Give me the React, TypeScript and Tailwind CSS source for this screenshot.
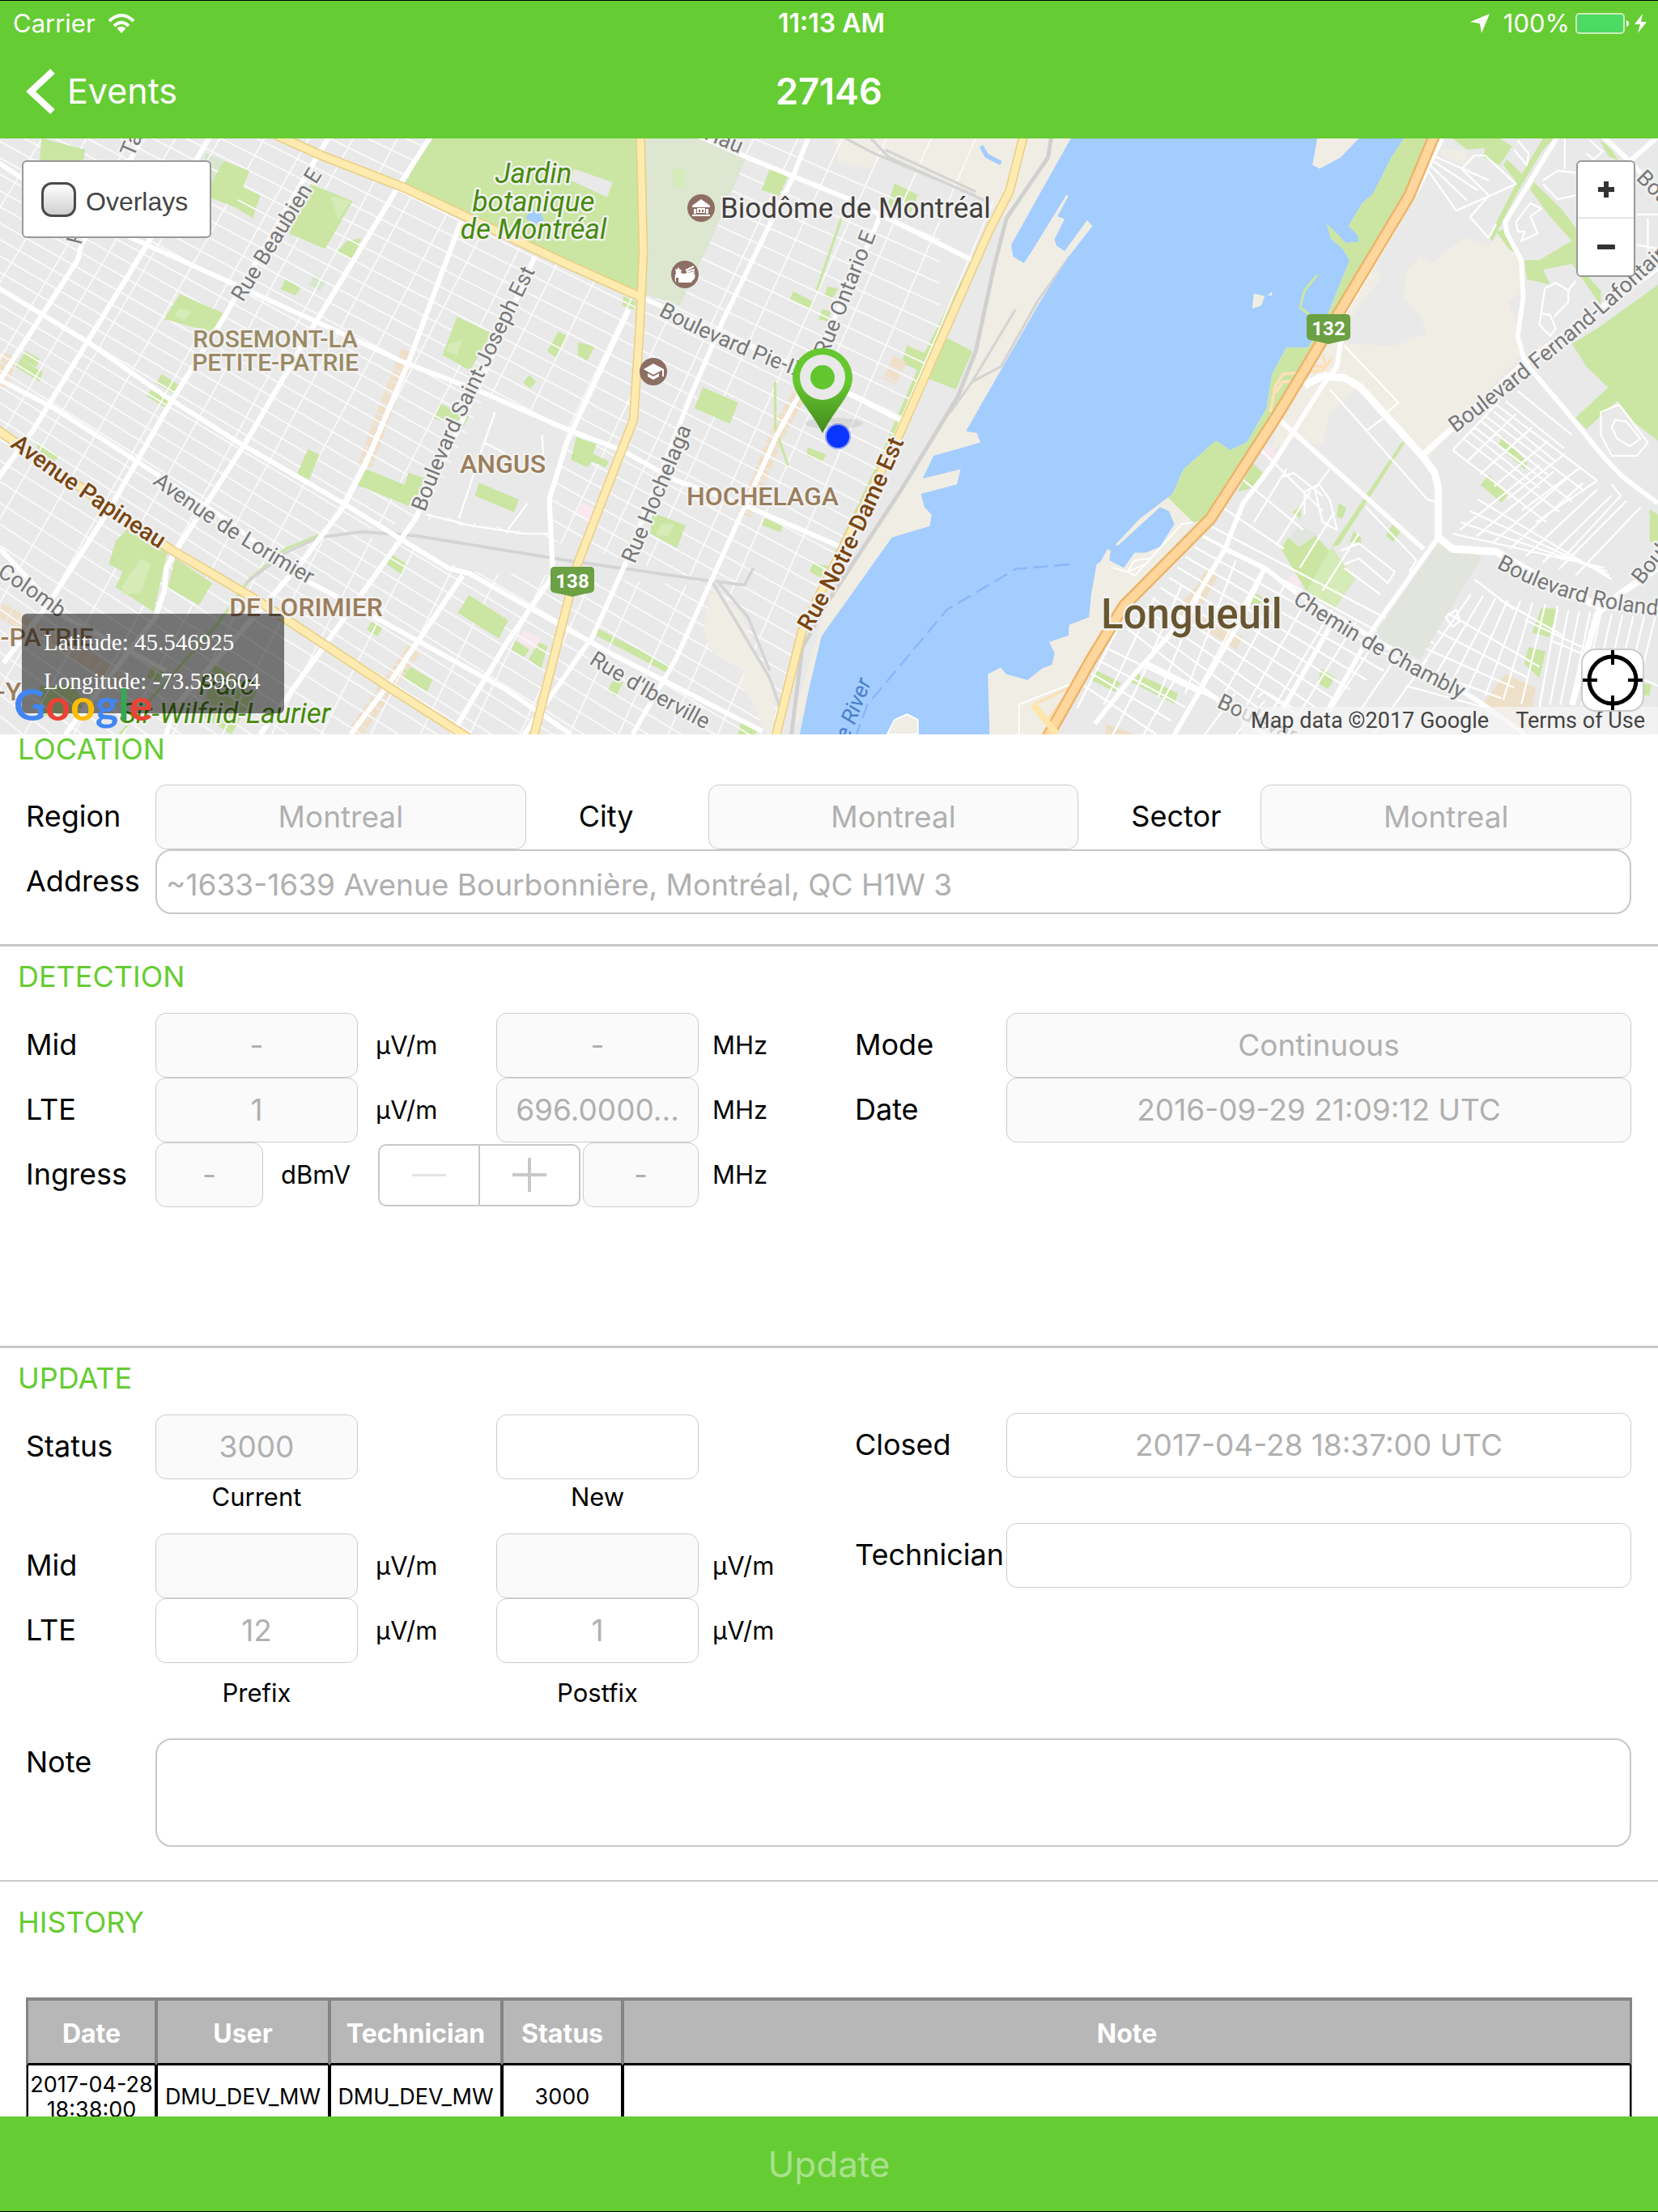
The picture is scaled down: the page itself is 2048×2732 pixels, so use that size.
import React from "react";

type Edge = [number, number, number, number];

/* Evenly spaced straight streets running from one edge to another. */
function hatch(a: Edge, b: Edge, n: number): string {
  let d = "";
  for (let i = 0; i <= n; i++) {
    const t = i / n;
    const x1 = a[0] + (a[2] - a[0]) * t;
    const y1 = a[1] + (a[3] - a[1]) * t;
    const x2 = b[0] + (b[2] - b[0]) * t;
    const y2 = b[1] + (b[3] - b[1]) * t;
    d += `M${x1.toFixed(0)},${y1.toFixed(0)}L${x2.toFixed(0)},${y2.toFixed(0)}`;
  }
  return d;
}

const PARK = "#cae6a2";
const SAND = "#f0ede4";
const WATER = "#a3ccff";

const parksWest = [
  "M1190,0H1760L1775,200L1765,400L1568,320L1290,205L1120,120Z",
  "M115,0L235,30L230,62H110Z",
  "M690,85L650,180L565,150L620,60Z",
  "M665,125L720,150L700,210L640,175Z",
  "M860,120L975,165L900,290L800,250Z",
  "M960,270L1000,262L975,318L930,300Z",
  "M790,370L832,392L818,413L776,397Z",
  "M498,410L618,460L590,510L455,475Z",
  "M70,558L110,580L100,602L58,580Z",
  "M58,580L118,615L110,640L42,600Z",
  "M447,620L496,650L485,675L432,645Z",
  "M424,655L475,688L460,710L406,678Z",
  "M1265,470L1360,512L1300,610L1225,570Z",
  "M1215,697L1300,730L1280,760L1198,735Z",
  "M1545,508L1568,520L1540,578L1514,560Z",
  "M1465,622L1484,640L1466,658L1448,642Z",
  "M1600,535L1645,548L1625,585L1598,570Z",
  "M852,818L884,832L855,898L823,882Z",
  "M1005,867L1120,912L1130,880L1175,895L1140,970L988,912Z",
  "M1325,906L1436,950L1422,983L1314,940Z",
  "M1595,785L1650,805L1640,830L1685,850L1675,865L1640,850L1625,865L1580,845Z",
  "M355,1025L465,1080L425,1245L320,1180L340,1140L302,1120L320,1060Z",
  "M485,1105L587,1170L550,1228L465,1180Z",
  "M1085,1095L1128,1122L1112,1148L1070,1120Z",
  "M1298,1202L1406,1268L1380,1315L1267,1248Z",
  "M1030,1270L1058,1288L1045,1310L1015,1292Z",
  "M1122,1382L1196,1424L1182,1456L1106,1412Z",
  "M1425,1320L1465,1345L1450,1365L1413,1345Z",
  "M1490,1325L1515,1335L1497,1397L1463,1370Z",
  "M420,1390L455,1405L440,1430L405,1418Z",
  "M590,1385L720,1440L640,1568L560,1520Z",
  "M110,1440H200L225,1470V1510L120,1520Z",
  "M100,800L165,835L150,850L105,820Z",
  "M1945,655L2042,695L2020,750L1922,710Z",
  "M2130,82L2180,98L2155,152L2108,135Z",
  "M2475,118L2540,148L2520,195L2455,180Z",
  "M2195,402L2252,430L2244,450L2185,425Z",
  "M2290,390L2320,395L2300,425L2280,415Z",
  "M2275,450L2300,455L2290,482L2265,475Z",
  "M2510,545L2560,565L2540,610L2495,590Z",
  "M2620,525L2690,560L2645,660L2570,632Z",
  "M2235,812L2285,832L2275,852L2230,835Z",
  "M1805,985L1897,1018L1873,1077L1800,1040Z",
  "M2115,998L2166,1020L2160,1036L2108,1018Z",
  "M2250,1118L2295,1125L2270,1155L2240,1140Z",
  "M1655,1290L1860,1390L1850,1408L1650,1308Z",
  "M1700,1420L1725,1430L1703,1470L1682,1450Z",
  "M2052,1525L2100,1550L2090,1568H2042Z",
  "M2700,300L2720,310L2480,800L2400,1000L2330,1100L2310,1090L2420,870L2560,560Z",
  "M1725,415L1760,430L1755,450L1722,440Z",
];

const parksEast = [
  "M865,0H935L870,150L640,530L520,710L330,1000L282,1010L212,945L225,935L255,870L345,795L385,820L430,800L485,710L500,620L540,550H600L655,460L715,320L695,290L662,262L652,225L705,275L740,272L738,255L712,230L750,170L780,145L830,50Z",
  "M1330,540L1400,500L1568,385V795L1505,750L1455,690L1370,765L1340,735L1430,655L1370,600Z",
  "M1000,0H1130L1165,20L1130,70L1085,50L1090,25L1040,30Z",
  "M1280,0L1250,30L1180,140L1110,270L1100,260L1180,110L1250,0Z",
  "M1150,55L1200,100L1180,120L1140,70Z",
  "M1225,115L1300,185L1345,240L1342,330L1410,400V440L1330,330L1250,345L1270,385L1205,370L1198,320L1240,320L1310,280L1330,270L1265,200L1215,135Z",
  "M1405,0L1440,30L1460,60L1430,45Z",
  "M1140,240L1170,300L1155,290L1120,245Z",
  "M1138,783L1207,855L1200,872L1125,808Z",
  "M1100,885L1152,938L1135,958L1077,912Z",
  "M1245,1235L1290,1238L1268,1313L1220,1300Z",
  "M1210,1338L1257,1350L1240,1420L1198,1382Z",
  "M448,855L475,880L445,920L405,930Z",
  "M545,1050L575,1075L620,1045L730,1160L670,1240L595,1190L525,1080Z",
  "M833,1015L855,1035L835,1062L815,1045Z",
  "M725,1035L747,1050V1065L715,1062Z",
  "M685,960L706,972L695,1000L678,995Z",
  "M580,965V1000L556,985Z",
  "M858,800L868,800L685,1070L665,1075Z",
  "M445,1192L480,1210L460,1235L430,1220Z",
  "M120,1405L240,1460L230,1488L105,1428Z",
  "M10,1398L82,1432L65,1456L0,1425Z",
  "M635,1395L675,1418L655,1448L628,1435Z",
  "M1545,975L1568,990V1070L1545,1060V1010Z",
  "M1530,1435H1550L1545,1465H1530Z",
];

const minorEast = [
  hatch([925, 75, 945, 45], [1010, 190, 1100, 110], 3),
  "M1010,190L1175,120L1090,45L1060,45L1025,80L1100,150L1048,207L1100,262L1120,225",
  "M1170,30L1205,70L1210,40L1180,5M1370,40L1390,55L1415,35L1380,5",
  "M1215,170L1175,220L1180,245L1200,245L1190,270L1235,250L1215,205L1245,185Z",
  "M1250,110L1290,85L1340,90M1250,120L1290,160L1340,150M1310,0V80",
  "M1340,375L1320,400L1285,380L1255,395L1240,490L1270,520L1285,500L1270,465L1245,460M1320,400V430L1280,470",
  "M660,660L930,950L950,955M700,545L850,695L820,720M760,770L810,735",
  hatch([1045, 770, 1180, 665], [1240, 920, 1330, 780], 4),
  hatch([1000, 820, 1230, 1010], [1130, 690, 1400, 900], 6),
  hatch([1000, 820, 1120, 700], [1260, 1010, 1400, 900], 4),
  hatch([1020, 1030, 1340, 1150], [1240, 860, 1520, 970], 7),
  hatch([1070, 950, 1000, 1040], [1440, 1160, 1420, 1130], 3),
  "M1440,910L1465,940L1300,1110M1410,720L1460,700L1540,800L1510,835H1440L1410,780ZM1440,760L1450,740L1480,745L1520,790L1490,810L1455,790Z",
  hatch([970, 1240, 870, 1440], [1240, 1390, 1100, 1500], 4),
  hatch([1050, 1200, 1290, 1230], [890, 1420, 1240, 1500], 7),
  hatch([1290, 1240, 1560, 1260], [1240, 1490, 1500, 1490], 9),
  hatch([1060, 1160, 1270, 1320], [1170, 1240, 1568, 1440], 3),
  hatch([470, 820, 300, 1040], [640, 980, 480, 1130], 3),
  hatch([540, 870, 740, 1040], [450, 1010, 640, 1190], 3),
  "M590,990V930L630,910L660,950L680,1030L640,1010L620,930M660,870L620,920M530,890L560,880L640,940",
  hatch([330, 1020, 100, 1290], [950, 1330, 480, 1568], 10),
  hatch([470, 1140, 930, 1370], [290, 1460, 780, 1568], 7),
  hatch([100, 1240, 400, 1110], [-40, 1500, 260, 1460], 4),
  hatch([40, 1340, -20, 1440], [300, 1460, 180, 1568], 3),
  hatch([150, 1400, 480, 1480], [60, 1568, 400, 1568], 4),
  "M690,1085L740,1065L840,1140L820,1170L740,1105L700,1120M760,970L900,1110L880,1140M700,1130L800,1200",
  "M460,1470L480,1455L560,1500M980,1260L1010,1240L1020,1270L1000,1285Z",
  "M1510,200H1568M1540,210V310M1510,280L1568,290",
].join("");

const majorWest =
  "M-10,900L90,770L400,290L590,-20M-10,650L215,320L225,280L400,-10M10,1380L130,1230L300,980L475,690L620,470L870,60L920,-20M180,1568L430,1260L455,1190L460,1130L490,1080L680,800L870,490L1100,130L1195,-10M460,1568L480,1500L720,1240L830,1120L950,970L1010,860L1130,590L1275,220M1480,310L1340,620L1150,1000L1000,1200L720,1568M1250,1568L1400,1330L1530,1150L1520,950L1568,800L1740,450M970,1568L1080,1430L1280,1150";
const majorWest2 =
  "M1450,1568L1640,1310L1730,1120L1910,680L2000,480L2190,110L2240,-10M1750,1568L1870,1370L2060,970L2150,780L2220,660L2420,240L2440,190M-10,60L100,130L360,260L640,380L870,480L1120,590L1340,670L1568,765L1720,820L1870,900L2060,965L2340,1080M-10,390L250,540L460,680L660,800L950,960L1110,1055L1240,1130L1300,1145L1568,1290L1700,1360L2110,1560M-10,630L150,710L380,850L620,1000L850,1165L1000,1240L1400,1450L1580,1568M1900,-20L2068,50L2350,160L2690,320M1768,415L2200,600L2500,745M0,1080L180,1260L300,1320L460,1400";

/* Text that follows a street. */
function Along({ id, d, size, fill, weight, italic, children }: { id: string; d: string; size: number; fill: string; weight?: number; italic?: boolean; children: string }) {
  return (
    <>
      <path id={id} d={d} fill="none" />
      <text fontSize={size} fill={fill} fontWeight={weight} fontStyle={italic ? "italic" : undefined} stroke="#f1f1f1" strokeWidth={5} strokeLinejoin="round" paintOrder="stroke">
        <textPath href={"#" + id}>{children}</textPath>
      </text>
    </>
  );
}

function Shield({ x, y, n }: { x: number; y: number; n: string }) {
  return (
    <g>
      <path d={`M${x - 27},${y + 5}q0,-5 5,-5h44q5,0 5,5v22q0,4 -4,5q-12,2 -23,5q-11,-3 -23,-5q-4,-1 -4,-5z`} fill="#6ba043" />
      <text x={x} y={y + 26} textAnchor="middle" fontSize={24} fontWeight={700} fill="#fff">{n}</text>
    </g>
  );
}

function MapDrawing() {
  return (
    <svg className="block h-[736px] w-full" viewBox="0 0 2048 736" preserveAspectRatio="xMidYMid slice" fontFamily="Roboto, sans-serif" role="img" aria-label="Map of Montréal and Longueuil">
      <defs>
        <linearGradient id="pinFill" x1="0" y1="0" x2="0" y2="1">
          <stop offset="0.4" stopColor="#65c82f" />
          <stop offset="1" stopColor="#44881d" />
        </linearGradient>
        <clipPath id="westLand">
          <path d="M-10,-10H2770L2740,240L2490,780L2210,1300L2150,1580H-10Z" />
        </clipPath>
      </defs>
      <rect width="2048" height="736" fill="#e9e9e9" />
      <g transform="scale(0.4464 0.4694)" fill="none" strokeLinejoin="round">
        <path fill={SAND} d="M2310,0H2980L3100,200L2700,900L2180,1568L2190,1540L2290,1220L2500,920L2650,680L2700,560L2750,340L2780,220L2700,150L2450,40L2400,80L2320,60Z" />
        <path fill="#dce6d0" d="M1785,0H1940L2065,50L1970,260L1880,440L1785,410Z" />
        <path fill="#d8e6d0" d="M568,38L665,78L620,150L560,120ZM870,355L902,375L885,402L855,385Z" />
        <g fill={PARK}>
          {parksWest.map((d) => (
            <path key={d} d={d} />
          ))}
        </g>
        <path fill="#f9e8ee" d="M1450,1293L1497,1315L1480,1345L1430,1320ZM1605,958L1650,975L1635,1010L1597,990Z" />
        <g stroke="#f0dfc9" strokeWidth="40" strokeDasharray="26 5">
          <path d="M1130,560L1080,680L1010,860M2225,650L2150,780L2060,990M2490,580L2460,640M1145,1345L1060,1460L980,1568" />
          <path d="M0,1240L260,1380L330,1430M30,570L0,650" />
        </g>
        <g stroke="#fafafa" strokeWidth="4" clipPath="url(#westLand)">
          <path d={hatch([-20, -860, -20, 770], [2600, 210, 2600, 2380], 38)} />
          <path d={hatch([0, -10, 2950, -10], [-1030, 1568, 2260, 1568], 24)} />
          <path d={hatch([-20, 780, -20, 1560], [1300, 1560, 400, 1900], 14)} />
        </g>
        {/* Blocks the street grid does not cross */}
        <path fill={SAND} d="M1970,1180L2050,1250L2110,1400L2140,1420V1568H2120L2080,1480L2050,1440L2060,1400L1970,1350L1945,1290Z" />
        <path fill={PARK} d="M1190,0H1760L1775,200L1765,400L1568,320L1290,205L1120,120Z" />
        <path fill="#dce6d0" d="M1785,0H1940L2065,50L1970,260L1880,440L1785,410Z" />
        <path fill="#e9e9e9" d="M1588,80L1695,115L1680,155L1580,110ZM1180,985L1340,680L1568,770L1530,900L1525,1045L1300,1010ZM960,1040L1110,1065L1300,1140L1540,1150L1980,1180L1700,1100L1530,1060L1160,1000Z" />
        <path fill={WATER} d="M1465,190L1490,185L1505,215L1480,225L1455,210Z" />
        <path stroke="#fff" strokeWidth="5" d="M1340,800L1270,1000M1370,720L1340,800L1440,850M1460,960L1405,1030M1180,990L1300,1018L1450,1040L1525,1040M1500,780L1505,860" />
        <g fill={PARK}>
          <path d="M860,120L975,165L900,290L800,250ZM498,410L618,460L590,510L455,475ZM1265,470L1360,512L1300,610L1225,570ZM1005,867L1120,912L1130,880L1175,895L1140,970L988,912ZM1325,906L1436,950L1422,983L1314,940ZM355,1025L465,1080L425,1245L320,1180L340,1140L302,1120L320,1060ZM485,1105L587,1170L550,1228L465,1180ZM1298,1202L1406,1268L1380,1315L1267,1248ZM1945,655L2042,695L2020,750L1922,710ZM2620,525L2690,560L2645,660L2570,632ZM1805,985L1897,1018L1873,1077L1800,1040ZM690,85L650,180L565,150L620,60ZM115,0L235,30L230,62H110ZM852,818L884,832L855,898L823,882ZM1595,785L1650,805L1640,830L1685,850L1675,865L1640,850L1625,865L1580,845ZM2130,82L2180,98L2155,152L2108,135Z" />
        </g>
        <path fill="#d5ebb8" d="M390,1105L418,1120L390,1195L340,1200L335,1180ZM500,445L528,455L510,480L482,465ZM915,150L970,165L935,215ZM1862,80H1895V130H1865ZM1240,540L1280,530L1265,570L1235,560ZM1830,1015H1865L1850,1045H1815Z" />
        <path stroke="#cae6a2" strokeWidth="7" d="M880,1045L790,1080L690,1160L600,1280L330,1568M2328,210L2260,400M2145,640V760L2180,860" />
        <path stroke="#d4d4d4" strokeWidth="8" d="M680,1170L790,1090L880,1050L1000,1035L1150,1045L1568,1110L1970,1165L2030,1260L2130,1420L2160,1500M1990,1170L2070,1260L2130,1400M1980,1165L2060,1175L2085,1130" />
        <path stroke="#d4d4d4" strokeWidth="7" d="M2340,0L2420,40L2700,150M2410,0L2460,50L2740,170M2450,30L2700,140M2810,450L2690,640L2630,720M2960,310L2870,430L2770,600L2690,640" />
        <path stroke="#d0d0d0" strokeWidth="11" d="M2910,-10L2900,50L2785,210L2750,340L2700,560L2650,680L2490,930L2290,1220L2220,1340L2190,1568" />
        <g stroke="#fff">
          <path strokeWidth="14" d={majorWest} />
          <path strokeWidth="13" d={majorWest2} />
        </g>
        <g strokeLinecap="butt">
          <path stroke="#e9cf87" strokeWidth="26" d="M750,-15L890,45L1120,130L1568,330L1768,415M1772,-10L1780,300L1770,500L1753,740L1708,850L1598,1120L1475,1580M2833,-10L2793,140L2738,240L2488,780L2268,1200L2218,1300L2145,1580M-10,765L470,1080L720,1220L1070,1440L1300,1580" />
          <path stroke="#ffebaf" strokeWidth="19" d="M750,-15L890,45L1120,130L1568,330L1768,415M1772,-10L1780,300L1770,500L1753,740L1708,850L1598,1120L1475,1580M2833,-10L2793,140L2738,240L2488,780L2268,1200L2218,1300L2145,1580M-10,765L470,1080L720,1220L1070,1440L1300,1580" />
        </g>
        <path fill={WATER} d="M2963,0L2798,280L2803,310L2833,328L2853,300L2951,148L2956,152L2926,205L2946,212L2918,265L2923,282L2946,296L3008,215L3023,230L2958,310L2878,430L2673,770L2703,775L2713,800L2583,835L2553,895L2658,870L2648,910L2548,935L2558,970L2578,990L2573,1020L2468,1050L2408,1130L2273,1310L2238,1450L2213,1568H4600V0Z" />
        <path stroke={WATER} strokeWidth="12" d="M2715,20L2730,45L2770,65" />
        <path stroke="#8ab4f8" strokeWidth="5" strokeDasharray="40 18" d="M2957,1121L2810,1133L2620,1240L2400,1490L2370,1568" />
        <path fill={SAND} stroke="#fff" strokeWidth="4" d="M2455,1568L2475,1530L2510,1515L2540,1530V1568Z" />
      </g>

      <g transform="translate(1348 0) scale(0.4464 0.4694)" fill="none" strokeLinejoin="round">
        <path fill="#e9e9e9" d="M865,0L830,50L780,145L750,170L712,230L738,255L740,272L705,275L652,225L662,262L695,290L715,320L655,460L600,550H540L500,620L485,710L430,800L385,820L345,795L255,870L225,935L135,1000L66,1070L75,1070L190,970L215,980L230,1015L190,1075L150,1090H120L90,1130L50,1110L53,1085L45,1080L25,1115L15,1120L0,1200L-6,1260L-61,1280L-63,1308L-116,1325L-101,1355L-109,1385L-136,1395L-176,1425L-236,1410L-251,1392L-286,1410L-281,1568H1568V0Z" />
        <path fill={SAND} d="M212,945L135,1000L66,1070L75,1070L190,970L215,980L230,1015L190,1075L150,1090H120L90,1130L50,1110L53,1085L45,1080L25,1115L15,1120L0,1200L-6,1260L-61,1280L-63,1308L-116,1325L-101,1355L-109,1385L-136,1395L-176,1425L-236,1410L-251,1392L-286,1410L-281,1568H-110L0,1370L90,1230L285,1010Z" />
        <path fill={SAND} d="M625,0H740L690,50L632,80L612,70ZM450,408L480,415L470,440L445,448ZM488,412L500,403V414Z" />
        <path fill={SAND} d="M870,350L910,310L940,330L1030,260L1100,280L1140,250L1190,330L1195,400L1155,430L1180,500L1190,570L1000,760L930,850L840,740L740,650L660,720L640,810L560,790L500,820L520,720L640,530L740,370L790,340L800,370L720,470L700,540L840,545L930,510L905,460L865,420ZM960,30H1040L1030,70L980,50Z" />
        <path fill="#e2e5dd" d="M960,1065L1080,1100L910,1370L780,1310ZM575,1015L625,1040L575,1075L550,1050Z" />
        <path fill="#eedfc8" d="M1145,1410L1230,1445L1205,1568H1180L1080,1490ZM320,1130L350,1150L300,1240L330,1280L420,1310L400,1345L310,1290L250,1260L240,1230L290,1180ZM40,1540L120,1568H40Z" />
        <path fill="#f9e8ee" d="M490,808L512,830L495,850L470,828ZM560,1145L585,1165L565,1190L540,1168Z" />
        <g fill={PARK}>
          {parksEast.map((d) => (
            <path key={d} d={d} />
          ))}
        </g>
        <path fill="#d5ebb8" d="M665,1075L730,1160L670,1240L595,1190Z" />
        <path stroke={PARK} strokeWidth="7" d="M625,360L590,400L578,445L605,465" />
        <path stroke="#fff" strokeWidth="5" d={minorEast} />
        <path fill="#e2e5dd" d="M960,1065L1080,1100L910,1370L780,1310Z" />
        <path stroke="#fff" strokeWidth="4" d="M282,1010L250,1015L150,1120L100,1140L60,1130M100,1140L120,1110L165,1105L120,1150ZM-200,1568V1490L-150,1470L-40,1430" />
        <path stroke="#fde0b8" strokeWidth="8" d="M495,720L510,650L530,620L640,610L665,580M570,640L530,640L510,670M600,600L650,600L640,570M-160,1490L-50,1440L-130,1540" />
        <g stroke="#fff">
          <path strokeWidth="20" d="M640,625L700,630L745,655L920,840L950,880L960,920V1050L1000,1080L1120,1087L1250,1160L1400,1230L1568,1240M590,650L640,625" />
          <path strokeWidth="16" d="M920,830L1200,590L1568,340" />
          <path strokeWidth="13" d="M690,530L680,600L640,650L500,860L420,960L370,1080L250,1270L110,1420L10,1540M520,740L920,1080M960,1050L780,1290L640,1530M370,1080L480,1130L560,1190L1070,1480L1200,1568M1290,-5L1210,120L1145,220L1150,250L1190,320L1195,420L1180,520L1200,590L1290,690L1420,840L1470,890L1568,960M480,1130L400,1290L230,1568M670,1270L530,1500M1410,-10L1490,60L1568,140M1490,60L1568,-5M150,1380L340,1470L480,1568M970,0L905,130L700,460" />
          <path strokeWidth="17" d="M1568,1130L1460,1200L1400,1250L1330,1490" />
        </g>
        <path stroke="#ecb46c" strokeWidth="34" d="M950,-10L880,150L640,530L520,720L330,1000L90,1230L0,1370L-130,1590" />
        <path stroke="#ffd69b" strokeWidth="23" d="M950,-10L880,150L640,530L520,720L330,1000L90,1230L0,1370L-130,1590" />
        <path stroke="#ffe5a8" strokeWidth="18" d="M-160,1490L-95,1568" />
      </g>

      <g>
        <Along id="t-talon" d="M165,24L185,-24" size={27} fill="#777">Talon</Along>
        <Along id="t-jean" d="M100,132L108,100" size={27} fill="#777">R</Along>
        <Along id="t-beaubien" d="M300,203L402,38" size={27} fill="#777">Rue Beaubien E</Along>
        <Along id="t-joseph" d="M525,462Q553,385 595,300Q628,230 668,150" size={27} fill="#777">Boulevard Saint-Joseph Est</Along>
        <Along id="t-papineau" d="M12,380Q90,440 217,520" size={29} fill="#7a4510" weight={500}>Avenue Papineau</Along>
        <Along id="t-lorimier" d="M188,426Q260,482 390,556" size={27} fill="#777">Avenue de Lorimier</Along>
        <Along id="t-colomb" d="M-4,540Q30,560 80,598" size={27} fill="#777">Colomb</Along>
        <Along id="t-viau" d="M864,-2L925,24" size={27} fill="#777">Viau</Along>
        <Along id="t-ontario" d="M1022,270L1088,104" size={27} fill="#777">Rue Ontario E</Along>
        <Along id="t-pie" d="M813,218Q880,255 1000,300" size={27} fill="#777">Boulevard Pie-IX</Along>
        <Along id="t-hochelaga" d="M784,526L862,340" size={27} fill="#777">Rue Hochelaga</Along>
        <Along id="t-notredame" d="M1001,610Q1060,510 1127,350" size={29} fill="#7a4510" weight={500}>Rue Notre-Dame Est</Along>
        <Along id="t-iberville" d="M727,648Q790,688 875,732" size={27} fill="#777">Rue d'Iberville</Along>
        <Along id="t-fernand" d="M1798,364Q1956,245 2070,135" size={27} fill="#777">Boulevard Fernand-Lafontaine</Along>
        <Along id="t-roland" d="M1848,530Q1950,586 2070,590" size={27} fill="#777">Boulevard Roland-T</Along>
        <Along id="t-chambly" d="M1596,573Q1696,640 1820,700" size={27} fill="#777">Chemin de Chambly</Along>
        <Along id="t-boul" d="M1502,702L1600,748" size={27} fill="#777">Boulevard</Along>
        <Along id="t-bou2" d="M2020,50L2060,90" size={27} fill="#777">Bou</Along>
        <Along id="t-bou3" d="M2028,552L2070,500" size={27} fill="#777">Boul</Along>
        <path id="t-river" d="M1048,744L1084,652" />
        <text fontSize={27} fontStyle="italic" fill="#4a7fc9">
          <textPath href="#t-river">e River</textPath>
        </text>

        <g stroke="#f1f1f1" strokeWidth={5} strokeLinejoin="round" paintOrder="stroke">
          <g fontSize={30} fontWeight={500} textAnchor="middle" fill="#9a8a64">
            <text x={340} y={258}>ROSEMONT-LA</text>
            <text x={340} y={287}>PETITE-PATRIE</text>
          </g>
          <g fontSize={32} fontWeight={500} textAnchor="middle" fill="#9b7e5c">
            <text x={621} y={413}>ANGUS</text>
            <text x={378} y={590}>DE LORIMIER</text>
            <text x={942} y={453}>HOCHELAGA</text>
            <text x={58} y={627}>-PATRIE</text>
            <text x={11} y={694}>-Y</text>
          </g>
          <g fontSize={35} fontStyle="italic" textAnchor="middle" fill="#478a0c">
            <text x={659} y={55}>Jardin</text>
            <text x={659} y={90}>botanique</text>
            <text x={659} y={124}>de Montréal</text>
            <text x={280} y={687}>Parc</text>
            <text x={278} y={722}>Sir-Wilfrid-Laurier</text>
          </g>
          <text x={890} y={98} fontSize={35} fill="#433f3c">Biodôme de Montréal</text>
          <text x={1360} y={605} fontSize={51} fontWeight={500} fill="#675630">Longueuil</text>
        </g>
      </g>

      <Shield x={707} y={529} n="138" />
      <Shield x={1641} y={217} n="132" />

      {/* Museum */}
      <g transform="translate(866 86)">
        <circle r="17" fill="#8d6e63" />
        <path d="M-11,-3L0,-11L11,-3V-1H-11ZM-9,1H-6V7H-9ZM9,1H6V7H9ZM-11,8H11V10H-11ZM-5,0H5V6H-5Z" fill="#fff" />
        <path d="M-3,2H-1V5H-3ZM3,2H1V5H3Z" fill="#8d6e63" />
      </g>
      {/* Zoo */}
      <g transform="translate(846 168)">
        <circle r="17" fill="#8d6e63" />
        <path d="M-12,-7L-10,-6L-8,-9L-6,-6L-4,-6L-5,-2Q-3,-1 0,-1Q3,-3 7,-2L12,-1Q14,5 9,8L8,10H-8L-8,4H-11V9H-12Q-13,2 -11,-2Z" fill="#fff" />
        <path d="M1,-5L11,-10M2,-3L12,-6M4,-1L12,-3" stroke="#fff" strokeWidth="2" />
      </g>
      {/* School */}
      <g transform="translate(807 288)">
        <circle r="17" fill="#8d6e63" />
        <path d="M0,-10L13,-3V6H11V-2L0,4L-12,-3ZM-7,2L0,6L7,2V6L0,10L-7,6Z" fill="#fff" />
      </g>

      <ellipse cx="1030" cy="352" rx="36" ry="7" fill="#000" opacity="0.07" />
      <circle cx="1035" cy="368" r="16" fill="#0a35ff" opacity="0.4" />
      <circle cx="1035" cy="368" r="14" fill="#0a35ff" />
      <path d="M1016,259C1036,259 1053,275 1053,296C1053,316 1030,336 1016,364C1002,336 979,316 979,296C979,275 996,259 1016,259Z" fill="url(#pinFill)" />
      <circle cx="1016" cy="295" r="28" fill="#e9e9e9" />
      <circle cx="1016" cy="295" r="15" fill="#62c62e" />
    </svg>
  );
}

const fieldBase = "h-[80px] min-w-0 rounded-[13px] border border-[#cccccc] px-3 pb-[2px] text-center text-[37px] text-[#b0b0b0] outline-none";
const labelText = "shrink-0 pb-[2px] text-[36px] text-black";
const unitText = "text-[31px] text-black";

function Field({ id, value, off = true, size, label }: { id: string; value: string; off?: boolean; size: string; label?: string }) {
  return <input id={id} aria-label={label} type="text" defaultValue={value} readOnly={off} className={`${fieldBase} ${size} ${off ? "bg-[#fafafa]" : "bg-white"}`} />;
}

function Heading({ children }: { children: string }) {
  return <h2 className="pl-[22px] text-[36px] leading-[36px] text-[#66cc33]">{children}</h2>;
}

function MeasureRow({ id, name, a, b, unitB, off }: { id: string; name: string; a: string; b: string; unitB: string; off: boolean }) {
  return (
    <div className="flex items-center">
      <label htmlFor={id} className={`${labelText} w-[160px]`}>{name}</label>
      <Field id={id} value={a} off={off} size="w-[250px]" />
      <span className={`${unitText} w-[171px] pl-[22px]`}>µV/m</span>
      <Field id={`${id}-b`} label={`${name} ${unitB}`} value={b} off={off} size="w-[250px]" />
      <span className={`${unitText} pl-[17px]`}>{unitB}</span>
    </div>
  );
}

function WideRow({ id, name, value, off = true }: { id: string; name: string; value: string; off?: boolean }) {
  return (
    <div className="flex items-center">
      <label htmlFor={id} className={`${labelText} w-[187px]`}>{name}</label>
      <Field id={id} value={value} off={off} size="flex-1" />
    </div>
  );
}

function CaptionRow({ a, b }: { a: string; b: string }) {
  return (
    <div className="flex pl-[160px] text-center text-[31px] leading-[44px] text-black">
      <span className="w-[250px]">{a}</span>
      <span className="ml-[171px] w-[250px]">{b}</span>
    </div>
  );
}

const columns = ["Date", "User", "Technician", "Status", "Note"];

export default function App() {
  return (
    <div className="flex h-screen flex-col overflow-hidden bg-white font-['Inter',sans-serif] text-black">
      <header className="shrink-0 border-t border-black bg-[#66cc33] text-white">
        <div className="grid h-[55px] grid-cols-3 items-center pl-[16px] pr-[10px] text-[31px] leading-[54px]">
          <div className="flex items-center gap-[15px]">
            <span>Carrier</span>
            <svg width="34" height="24" viewBox="0 0 34 24" fill="none" stroke="#fff" strokeWidth="4" aria-label="Wi-Fi">
              <path d="M2,9Q17,-5 32,9M8,15Q17,6.500 26,15" />
              <path d="M11.500,18Q17,13.500 22.500,18L17,24Z" fill="#fff" stroke="none" />
            </svg>
          </div>
          <div className="text-center text-[32px] font-semibold">11:13 AM</div>
          <div className="flex items-center justify-end">
            <svg width="24" height="24" viewBox="0 0 24 24" fill="#fff" className="mr-[17px]" aria-label="Location">
              <path d="M24,0L14,24L12,12L0,10Z" />
            </svg>
            <span>100%</span>
            <svg width="92" height="26" viewBox="0 0 92 26" className="ml-[7px]" aria-label="Battery charging">
              <rect x="1" y="1" width="59" height="24" rx="4" fill="#4cd964" stroke="#cdeebb" strokeWidth="2" />
              <path d="M63,9Q66,10 66,13Q66,16 63,17Z" fill="#fff" />
              <path d="M83,1L73,14H80L77,25L88,11H81Z" fill="#fff" />
            </svg>
          </div>
        </div>
        <div className="grid h-[115px] grid-cols-3 items-center px-[32px] pb-[2px] text-[43px]">
          <button type="button" className="flex items-center gap-[15px] justify-self-start">
            <svg width="36" height="56" viewBox="0 0 36 56" fill="none" stroke="#fff" strokeWidth="8" aria-hidden="true">
              <path d="M33,3L6,28L33,53" />
            </svg>
            <span>Events</span>
          </button>
          <h1 className="text-center text-[45px] font-semibold">27146</h1>
        </div>
      </header>

      <main className="min-h-0 flex-1 overflow-hidden">
        <section className="relative" aria-label="Map">
          <MapDrawing />
          <label className="absolute left-[27px] top-[27px] flex h-[96px] w-[234px] items-center gap-[12px] rounded-[6px] border-2 border-[#999999] bg-white pl-[22px] font-['Liberation_Sans',sans-serif] text-[32px] text-[#444444]">
            <input type="checkbox" className="size-[43px] appearance-none rounded-[13px] border-[3px] border-[#4a4a4a] bg-linear-to-b from-white to-[#cfcfcf]" />
            <span className="pt-[5px]">Overlays</span>
          </label>
          <div className="absolute right-[28px] top-[27px] flex w-[73px] flex-col rounded-[6px] border-2 border-[#999999] bg-white">
            <button type="button" aria-label="Zoom in" className="flex h-[70px] items-center justify-center border-b-2 border-[#e6e6e6]">
              <svg width="22" height="22" viewBox="0 0 22 22" fill="#333" aria-hidden="true">
                <path d="M8,1H14V8H21V14H14V21H8V14H1V8H8Z" />
              </svg>
            </button>
            <button type="button" aria-label="Zoom out" className="flex h-[70px] items-center justify-center">
              <svg width="22" height="22" viewBox="0 0 22 22" fill="#333" aria-hidden="true">
                <rect y="8" width="22" height="6" rx="1" />
              </svg>
            </button>
          </div>
          <div className="absolute bottom-[26px] left-[27px] w-[324px] rounded-[6px] bg-black/50 pb-[16px] pl-[27px] pt-[11px] font-['Liberation_Serif',serif] text-[29px] leading-[48px] text-white">
            <div>Latitude: 45.546925</div>
            <div>Longitude: -73.539604</div>
          </div>
          <div className="absolute bottom-[2px] left-[17px] font-['Lato',sans-serif] text-[54px] font-bold leading-[70px]" aria-label="Google">
            <span className="text-[#4285f4]">G</span>
            <span className="text-[#ea4335]">o</span>
            <span className="text-[#fbbc05]">o</span>
            <span className="text-[#4285f4]">g</span>
            <span className="text-[#34a853]">l</span>
            <span className="text-[#ea4335]">e</span>
          </div>
          <div className="absolute bottom-0 right-0 flex justify-end gap-[33px] bg-[#f5f5f5]/70 pl-[12px] pr-[16px] font-['Roboto',sans-serif] text-[27px] leading-[34px] text-[#444444]">
            <span>Map data ©2017 Google</span>
            <a href="#terms">Terms of Use</a>
          </div>
          <button type="button" aria-label="Center on location" className="absolute bottom-[28px] right-[17px] size-[78px] rounded-[18px] border-2 border-[#cccccc] bg-white">
            <svg width="74" height="74" viewBox="0 0 74 74" fill="none" stroke="#000" aria-hidden="true">
              <circle cx="37" cy="37" r="29" strokeWidth="5" />
              <path strokeWidth="4" d="M37,0V18M37,56V74M0,37H18M56,37H74" />
            </svg>
          </button>
        </section>

        <section className="border-b-[3px] border-[#c8c8c8] pb-[37px]">
          <Heading>LOCATION</Heading>
          <div className="mt-[26px] grid grid-cols-3 gap-x-[65px] pl-[32px] pr-[33px]">
            {["Region", "City", "Sector"].map((name) => (
              <div key={name} className="flex items-center">
                <label htmlFor={name} className={`${labelText} w-[160px]`}>{name}</label>
                <Field id={name} value="Montreal" size="flex-1" />
              </div>
            ))}
          </div>
          <div className="flex items-center pl-[32px] pr-[33px]">
            <label htmlFor="address" className={`${labelText} w-[160px]`}>Address</label>
            <input id="address" type="text" readOnly defaultValue="~1633-1639 Avenue Bourbonnière, Montréal, QC H1W 3" className="h-[80px] min-w-0 flex-1 rounded-[20px] border-2 border-[#c8c8c8] bg-white px-[11px] pt-[7px] text-[37px] text-[#b0b0b0] outline-none" />
          </div>
        </section>

        <section className="border-b-[3px] border-[#c8c8c8] pb-[171px] pt-[19px]">
          <Heading>DETECTION</Heading>
          <div className="mt-[27px] grid grid-cols-2">
            <div className="pl-[32px]">
              <MeasureRow id="mid" name="Mid" a="-" b="-" unitB="MHz" off />
              <MeasureRow id="lte" name="LTE" a="1" b="696.0000..." unitB="MHz" off />
              <div className="flex items-center">
                <label htmlFor="ingress" className={`${labelText} w-[160px]`}>Ingress</label>
                <Field id="ingress" value="-" size="w-[133px]" />
                <span className={`${unitText} w-[142px] pl-[22px]`}>dBmV</span>
                <div className="flex h-[77px] w-[250px] rounded-[10px] border-2 border-[#c8c8c8]">
                  <button type="button" aria-label="Decrease ingress" className="flex flex-1 items-center justify-center border-r-2 border-[#c8c8c8]">
                    <span className="h-[3px] w-[42px] bg-[#e3e3e3]" />
                  </button>
                  <button type="button" aria-label="Increase ingress" className="flex flex-1 items-center justify-center">
                    <svg width="42" height="42" viewBox="0 0 42 42" stroke="#c8c8c8" strokeWidth="4" aria-hidden="true">
                      <path d="M21,0V42M0,21H42" />
                    </svg>
                  </button>
                </div>
                <span className="w-[3px]" />
                <Field id="ingress-b" label="Ingress MHz" value="-" size="w-[143px]" />
                <span className={`${unitText} pl-[17px]`}>MHz</span>
              </div>
            </div>
            <div className="pl-[32px] pr-[33px]">
              <WideRow id="mode" name="Mode" value="Continuous" />
              <WideRow id="date" name="Date" value="2016-09-29 21:09:12 UTC" />
            </div>
          </div>
        </section>

        <section className="border-b-2 border-[#c8c8c8] pb-[41px] pt-[19px]">
          <Heading>UPDATE</Heading>
          <div className="mt-[25px] grid grid-cols-2">
            <div className="pl-[32px] pt-[2px]">
              <div className="flex items-center">
                <label htmlFor="status" className={`${labelText} w-[160px]`}>Status</label>
                <Field id="status" value="3000" size="w-[250px]" />
                <span className="w-[171px]" />
                <Field id="status-new" label="New status" value="" off={false} size="w-[250px]" />
              </div>
              <CaptionRow a="Current" b="New" />
              <div className="mt-[23px]">
                <MeasureRow id="umid" name="Mid" a="" b="" unitB="µV/m" off />
                <MeasureRow id="ulte" name="LTE" a="12" b="1" unitB="µV/m" off={false} />
              </div>
              <div className="mt-[15px]">
                <CaptionRow a="Prefix" b="Postfix" />
              </div>
            </div>
            <div className="flex flex-col gap-[56px] pl-[32px] pr-[33px]">
              <WideRow id="closed" name="Closed" value="2017-04-28 18:37:00 UTC" off={false} />
              <WideRow id="tech" name="Technician" value="" off={false} />
            </div>
          </div>
          <div className="mt-[34px] flex items-start pl-[32px] pr-[33px]">
            <label htmlFor="note" className={`${labelText} w-[160px] leading-[58px]`}>Note</label>
            <textarea id="note" className="h-[134px] min-w-0 flex-1 resize-none rounded-[20px] border-2 border-[#c8c8c8] bg-white p-3 text-[36px] outline-none" />
          </div>
        </section>

        <section className="pt-[32px]">
          <Heading>HISTORY</Heading>
          <div className="mt-[75px] pl-[32px] pr-[32px]">
            <table className="w-full table-fixed border-separate border-spacing-0 border border-b-0 border-[#848484] text-center">
              <colgroup>
                <col className="w-[160px]" />
                <col className="w-[214px]" />
                <col className="w-[213px]" />
                <col className="w-[149px]" />
                <col />
              </colgroup>
              <thead>
                <tr className="h-[83px]">
                  {columns.map((c) => (
                    <th key={c} scope="col" className="border-x-2 border-b-[3px] border-t-[3px] border-x-[#848484] border-b-black border-t-[#848484] bg-[#b7b7b7] pt-[4px] text-[32px] font-bold text-white">{c}</th>
                  ))}
                </tr>
              </thead>
              <tbody className="text-[27px] leading-[31px]">
                <tr className="h-[77px]">
                  {["2017-04-28 18:38:00", "DMU_DEV_MW", "DMU_DEV_MW", "3000", ""].map((c, i) => (
                    <td key={i} className="border-x-2 border-black">{c}</td>
                  ))}
                </tr>
              </tbody>
            </table>
          </div>
        </section>
      </main>

      <footer className="flex h-[118px] shrink-0 border-b border-black bg-[#66cc33]">
        <button type="button" disabled className="flex-1 text-[44px] text-white/45">Update</button>
      </footer>
    </div>
  );
}
